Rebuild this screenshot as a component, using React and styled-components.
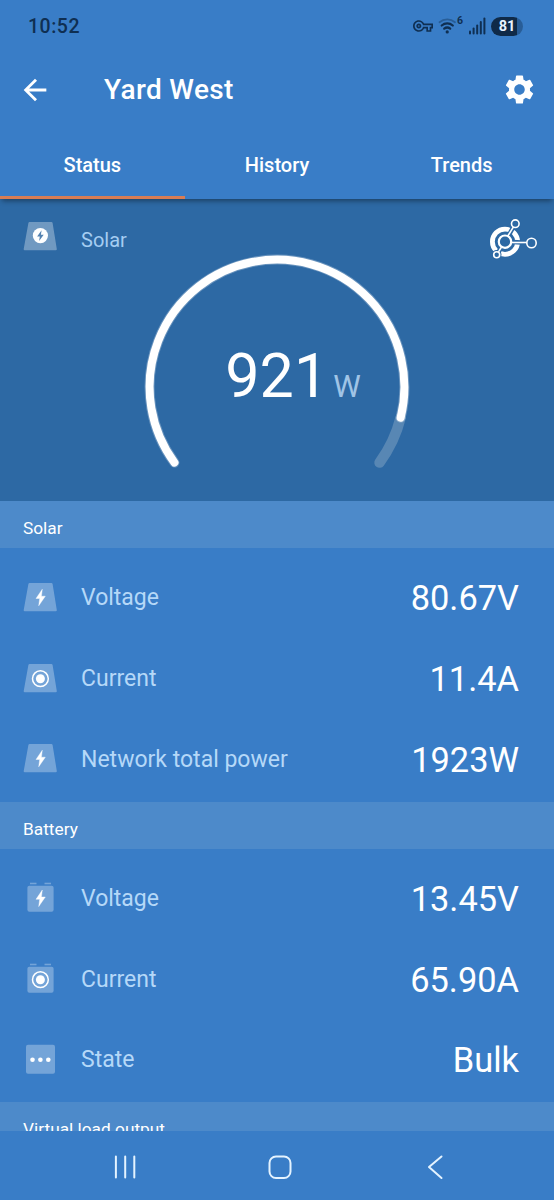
import React from "react";
import styled, { createGlobalStyle } from "styled-components";
import { MdArrowBack, MdSettings, MdOutlineVpnKey } from "react-icons/md";

const GlobalStyle = createGlobalStyle`
  * {
    box-sizing: border-box;
  }
  body {
    margin: 0;
    background: #397dc7;
    font-family: Roboto, "Liberation Sans", sans-serif;
  }
`;

const tabs = ["Status", "History", "Trends"];

const sections = [
  {
    title: "Solar",
    rows: [
      { icon: "panelBolt", label: "Voltage", value: "80.67V" },
      { icon: "panelDot", label: "Current", value: "11.4A" },
      { icon: "panelBolt", label: "Network total power", value: "1923W" },
    ],
  },
  {
    title: "Battery",
    rows: [
      { icon: "batteryBolt", label: "Voltage", value: "13.45V" },
      { icon: "batteryDot", label: "Current", value: "65.90A" },
      { icon: "state", label: "State", value: "Bulk" },
    ],
  },
  { title: "Virtual load output", rows: [] },
];

const Panel = ({ opacity = 0.3 }) => (
  <path
    d="M6.6 3h21.8q1 0 1.2 1l4.2 26q.2 1.3-1.1 1.3H1.8Q.5 31.3.7 30L5.4 4q.2-1 1.2-1z"
    fill="#fff"
    fillOpacity={opacity}
  />
);

const BatteryCase = () => (
  <g fill="#fff" fillOpacity="0.3">
    <rect x="4.4" y="5.7" width="26.2" height="26" rx="2" />
    <rect x="7" y="2.7" width="6.5" height="1.6" />
    <rect x="21.5" y="2.7" width="6.5" height="1.6" />
  </g>
);

const Bolt = () => <path d="M19.3 9.2l-6.3 9.300h3.700l-1 7.300 6.600-9.600h-3.900z" fill="#fff" stroke="#fff" strokeWidth="0.4" />;

const Dot = () => (
  <g>
    <circle cx="17.4" cy="17.7" r="7.9" fill="none" stroke="#fff" strokeWidth="1.5" />
    <circle cx="17.4" cy="17.7" r="4.5" fill="#fff" />
  </g>
);

const icons = {
  panelSolar: (
    <>
      <Panel opacity={0.32} />
      <circle cx="17.4" cy="16.6" r="7.6" fill="#fff" />
      <path d="M18.6 11.3l-4.500 6.100h2.700l-.7 4.600 4.600-6.200h-2.800z" fill="#5583b1" />
    </>
  ),
  panelBolt: (
    <>
      <Panel />
      <Bolt />
    </>
  ),
  panelDot: (
    <>
      <Panel />
      <Dot />
    </>
  ),
  batteryBolt: (
    <>
      <BatteryCase />
      <g transform="translate(0 .8)">
        <Bolt />
      </g>
    </>
  ),
  batteryDot: (
    <>
      <BatteryCase />
      <g transform="translate(0 1)">
        <Dot />
      </g>
    </>
  ),
  state: (
    <>
      <rect x="3" y="2.7" width="29" height="29" rx="2" fill="#fff" fillOpacity="0.3" />
      <g fill="#fff">
        <circle cx="9.5" cy="17.8" r="2.3" />
        <circle cx="17.4" cy="17.8" r="2.3" />
        <circle cx="25.3" cy="17.8" r="2.3" />
      </g>
    </>
  ),
};

const Icon = ({ name }) => (
  <svg width="35" height="35" viewBox="0 0 35 35">
    {icons[name]}
  </svg>
);

const WifiIcon = () => (
  <svg width="25" height="18" viewBox="0 0 25 18" fill="none" stroke="#0f2f52" strokeLinecap="round">
    <path d="M1.5 5.2a12 12 0 0 1 15.500 0" strokeWidth="1.8" strokeOpacity="0.4" />
    <path d="M3.7 8.5a8.500 8.500 0 0 1 11.100 0" strokeWidth="2.200" />
    <path d="M6.2 11.700a4.800 4.800 0 0 1 6 0" strokeWidth="2.200" />
    <circle cx="9.2" cy="14.900" r="1.6" fill="#0f2f52" stroke="none" />
  </svg>
);

const SignalIcon = () => (
  <svg width="17" height="18" viewBox="0 0 17 18" fill="#0f2f52">
    <rect x="0" y="13.5" width="2" height="4" rx="1" />
    <rect x="3.6" y="10.5" width="2" height="7" rx="1" />
    <rect x="7.2" y="7.5" width="2" height="10" rx="1" />
    <rect x="10.8" y="4" width="2" height="13.5" rx="1" />
    <rect x="14.4" y="0.5" width="2" height="17" rx="1" />
  </svg>
);

const NetworkIcon = () => (
  <svg width="48" height="42" viewBox="0 0 48 42" fill="none" stroke="#fff">
    <circle cx="16" cy="22.7" r="12.6" strokeWidth="4.8" />
    <g stroke="#2d69a4" strokeWidth="4.5">
      <path d="M16 22.7L26.3 4.7" />
      <path d="M16 22.7L42 24" />
      <path d="M16 22.7L7.7 35.7" />
    </g>
    <circle cx="26.3" cy="4.7" r="5.5" fill="#2d69a4" stroke="none" />
    <circle cx="7.7" cy="35.7" r="4.8" fill="#2d69a4" stroke="none" />
    <g strokeWidth="1.6">
      <path d="M18.5 17.5L24.3 8.2" />
      <path d="M22 23.5H37.8" />
      <path d="M12.5 28L9.5 32.8" />
      <circle cx="26.3" cy="4.7" r="3.8" />
      <circle cx="42.5" cy="24" r="4.7" />
      <circle cx="7.7" cy="35.7" r="3" />
    </g>
    <circle cx="16" cy="22.7" r="6.2" strokeWidth="2.2" />
  </svg>
);

// angle in degrees, clockwise from three o'clock
const point = (angle, r = 127.4) => {
  const rad = (angle * Math.PI) / 180;
  return `${140 + r * Math.cos(rad)} ${140 + r * Math.sin(rad)}`;
};

const Gauge = () => (
  <GaugeSvg width="280" height="280" viewBox="0 0 280 280">
    <path d={`M${point(13.9)} A127.4 127.4 0 0 1 ${point(36.4)}`} stroke="#5887b4" strokeWidth="10.5" />
    <path d={`M${point(143.6)} A127.4 127.4 0 1 1 ${point(13.9)}`} stroke="#fff" strokeOpacity="0.28" strokeWidth="10" />
    <path d={`M${point(143.6)} A127.4 127.4 0 1 1 ${point(13.9)}`} stroke="#fff" strokeWidth="8" />
  </GaugeSvg>
);

const App = () => {
  return (
    <Screen>
      <GlobalStyle />
      <StatusBar>
        <Clock>10:52</Clock>
        <StatusIcons>
          <MdOutlineVpnKey size={20} />
          <WifiGroup>
            <WifiIcon />
            <WifiBadge>6</WifiBadge>
          </WifiGroup>
          <SignalIcon />
          <BatteryPill>81</BatteryPill>
        </StatusIcons>
      </StatusBar>
      <Toolbar>
        <MdArrowBack size={34} />
        <Title>Yard West</Title>
        <MdSettings size={35} />
      </Toolbar>
      <Tabs>
        {tabs.map((tab, i) => (
          <Tab key={tab} $active={i === 0}>
            {tab}
          </Tab>
        ))}
      </Tabs>
      <Hero>
        <HeroTop>
          <Icon name="panelSolar" />
          <HeroLabel>Solar</HeroLabel>
          <NetworkIcon />
        </HeroTop>
        <GaugeWrap>
          <Gauge />
          <Reading>
            921<Unit>W</Unit>
          </Reading>
        </GaugeWrap>
      </Hero>
      <Content>
        {sections.map((section) => (
          <React.Fragment key={section.title}>
            <SectionTitle>{section.title}</SectionTitle>
            {section.rows.length > 0 && (
              <Rows>
                {section.rows.map((row) => (
                  <Row key={row.label}>
                    <Icon name={row.icon} />
                    <Label>{row.label}</Label>
                    <Value>{row.value}</Value>
                  </Row>
                ))}
              </Rows>
            )}
          </React.Fragment>
        ))}
      </Content>
      <NavBar>
        <svg width="24" height="26" viewBox="0 0 24 26">
          <path d="M2.9 2.5v21M12.2 2.5v21M21.3 2.5v21" />
        </svg>
        <svg width="26" height="26" viewBox="0 0 26 26">
          <rect x="2.5" y="2.5" width="21" height="21.5" rx="6.5" />
        </svg>
        <svg width="18" height="26" viewBox="0 0 18 26">
          <path d="M15.500 2.500L3 13l12.500 11" />
        </svg>
      </NavBar>
    </Screen>
  );
};

const Screen = styled.div`
  display: flex;
  flex-direction: column;
  width: 554px;
  height: 1200px;
  overflow: hidden;
  background: #397dc7;
  color: #fff;
`;

const StatusBar = styled.div`
  display: flex;
  justify-content: space-between;
  align-items: center;
  height: 52px;
  padding: 0 31px 0 28px;
  color: #0f2f52;
`;

const Clock = styled.span`
  font-size: 19.5px;
  font-weight: 500;
  letter-spacing: 0.5px;
`;

const StatusIcons = styled.div`
  display: flex;
  align-items: center;
  gap: 5.5px;
`;

const WifiGroup = styled.div`
  position: relative;
  display: flex;
`;

const WifiBadge = styled.span`
  position: absolute;
  top: -1px;
  right: 0;
  font-size: 10.5px;
  font-weight: 700;
  line-height: 10px;
`;

const BatteryPill = styled.span`
  display: flex;
  align-items: center;
  justify-content: center;
  width: 32px;
  height: 19px;
  border-radius: 10px;
  background: linear-gradient(to right, #0f2a48 26px, #285d97 26px);
  color: #e8f3ff;
  font-size: 14.5px;
  font-weight: 700;
`;

const Toolbar = styled.header`
  display: flex;
  align-items: center;
  height: 75px;
  padding: 0 17px 0 18px;
`;

const Title = styled.h1`
  flex: 1;
  margin: 0 0 0 52px;
  font-size: 28px;
  font-weight: 500;
  letter-spacing: 0.35px;
`;

const Tabs = styled.nav`
  display: flex;
  height: 72px;
  z-index: 1;
  box-shadow: 0 4px 5px -2px rgba(0, 0, 0, 0.4);
`;

const Tab = styled.div`
  display: flex;
  flex: 1;
  align-items: center;
  justify-content: center;
  padding-top: 7px;
  border-bottom: 3.5px solid ${({ $active }) => ($active ? "#d87d54" : "transparent")};
  font-size: 20px;
  font-weight: 500;
`;

const Hero = styled.section`
  height: 302px;
  background: #2d69a4;
`;

const HeroTop = styled.div`
  display: flex;
  align-items: flex-start;
  height: 47.5px;
  padding: 20px 17px 0 23px;
`;

const HeroLabel = styled.span`
  flex: 1;
  margin-left: 23px;
  color: #a5cdf2;
  font-size: 20px;
  line-height: 42px;
`;

const GaugeWrap = styled.div`
  display: grid;
  justify-items: center;
`;

const GaugeSvg = styled.svg`
  grid-area: 1 / 1;
  fill: none;
  stroke-linecap: round;
`;

const Reading = styled.div`
  grid-area: 1 / 1;
  padding: 93.5px 0 0 32px;
  font-size: 61px;
  line-height: 72px;
`;

const Unit = styled.span`
  margin-left: 5px;
  color: #a0c4e6;
  font-size: 31px;
`;

const Content = styled.main`
  height: 630px;
  overflow: hidden;
`;

const SectionTitle = styled.h2`
  height: 47px;
  margin: 0;
  padding: 8px 23px 0;
  background: #4d8aca;
  font-size: 17.3px;
  font-weight: 400;
  line-height: 38px;
`;

const Rows = styled.div`
  height: 253.5px;
  padding-top: 9px;
`;

const Row = styled.div`
  display: flex;
  align-items: center;
  height: 80.8px;
  padding: 0 35px 0 23px;
`;

const Label = styled.span`
  flex: 1;
  margin: 1px 0 0 23px;
  color: #b5d8f8;
  font-size: 23px;
`;

const Value = styled.span`
  margin-top: 2px;
  font-size: 34.4px;
`;

const NavBar = styled.footer`
  display: grid;
  grid-template-columns: repeat(3, 155px);
  justify-content: center;
  justify-items: center;
  padding: 23px 0 0 6px;
  height: 69px;

  svg {
    fill: none;
    stroke: #e4f3ff;
    stroke-width: 2;
    stroke-linecap: round;
    stroke-linejoin: round;
  }
`;

export default App;
